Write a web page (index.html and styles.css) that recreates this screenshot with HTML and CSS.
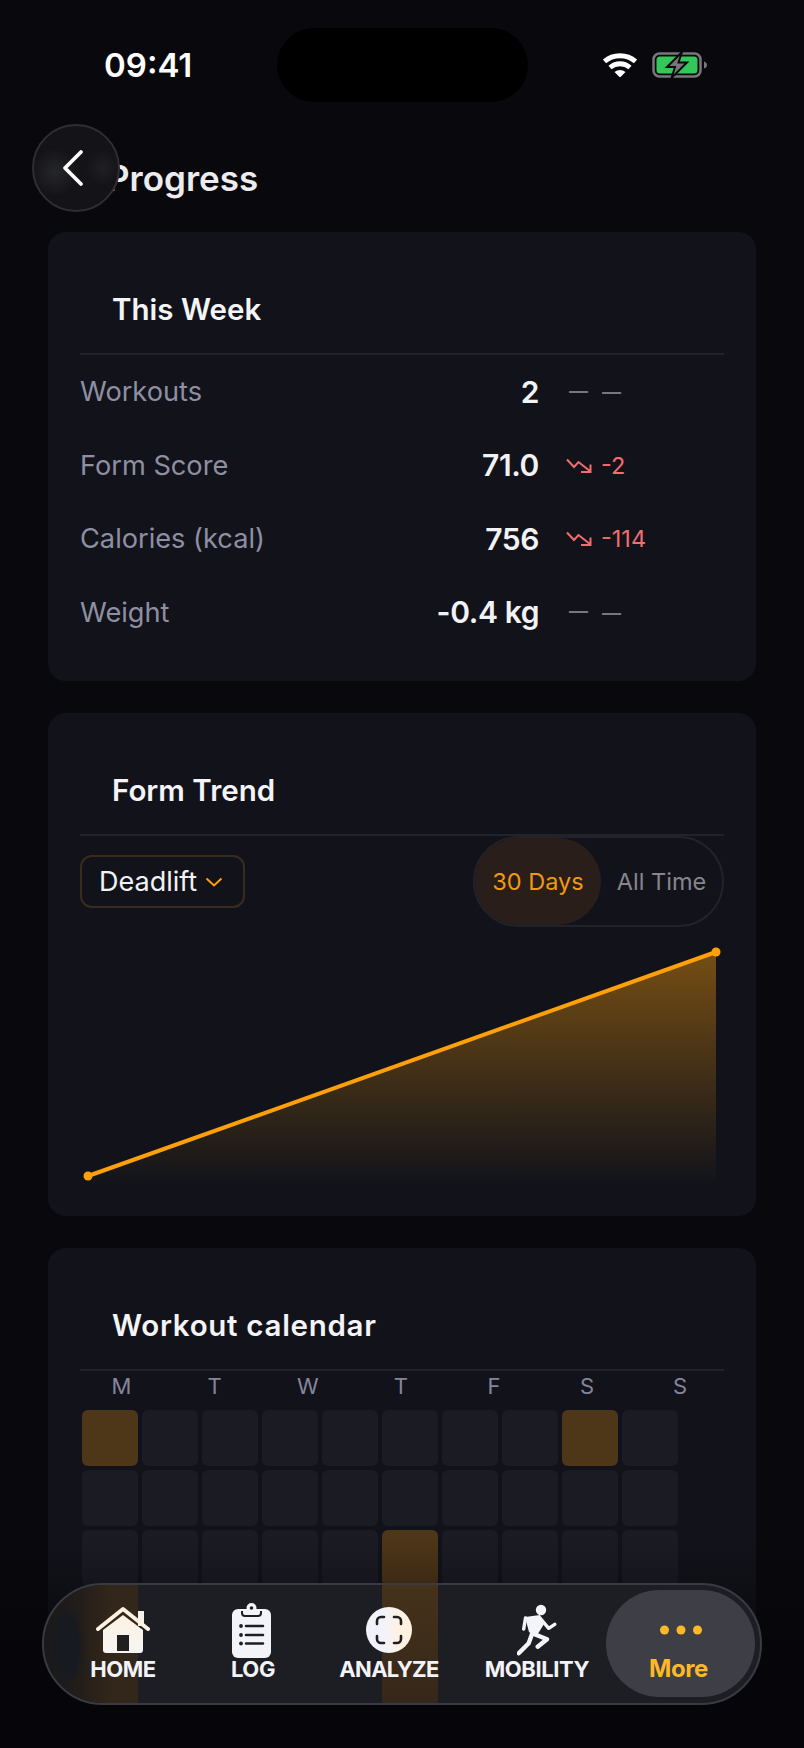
FILE: index.html
```html
<!DOCTYPE html>
<html lang="en">
<head>
<meta charset="utf-8">
<title>Progress</title>
<link rel="stylesheet" href="styles.css">
</head>
<body>
<div class="phone">
  <div class="status">
    <span class="time">09:41</span>
    <span class="island"></span>
    <span class="sys">
      <svg class="wifi" viewBox="0 0 34 24"><path d="M1.500 8.500C10 .8 24 .8 32.500 8.500" fill="none" stroke="#fff" stroke-width="4.800"/><path d="M7 14.500c6-5 14-5 20 0" fill="none" stroke="#fff" stroke-width="4.800"/><path d="M11.500 19c3.300-2.800 7.700-2.800 11 0L17 24.500z" fill="#fff"/></svg>
      <svg class="batt" viewBox="0 0 56 26"><rect x="1.500" y="1.500" width="47" height="23" rx="6" fill="none" stroke="#77777b" stroke-width="2.500"/><rect x="4.500" y="4.500" width="41" height="17" rx="3.500" fill="#34c759"/><path d="M52 9.500c2 .5 3 2 3 3.500s-1 3-3 3.500z" fill="#77777b"/><path d="M30 0 15 15h8L19.500 26 35 10.500h-8.500z" fill="#77777b" stroke="#0a0a0e" stroke-width="2"/></svg>
    </span>
  </div>

  <button class="back" aria-label="Back"><svg viewBox="0 0 22 38"><path d="M19 3 3 19l16 16" fill="none" stroke="#fff" stroke-width="3.800" stroke-linecap="round" stroke-linejoin="round"/></svg></button>
  <h1 class="title">Progress</h1>

  <section class="card">
    <h2 class="card-title">This Week</h2>
    <div class="stats">
      <div class="stat"><span class="stat-label">Workouts</span><span class="stat-value">2</span><span class="delta"><span class="dash">—</span><span class="dash low">—</span></span></div>
      <div class="stat"><span class="stat-label">Form Score</span><span class="stat-value">71.0</span><span class="delta down"><svg class="trend" viewBox="0 0 26 15"><path d="M1 1.500l7 7.500 4.500-5L24.500 13.500M24.500 6.500v7.500H15" fill="none" stroke="#f26d6d" stroke-width="2"/></svg>-2</span></div>
      <div class="stat"><span class="stat-label">Calories (kcal)</span><span class="stat-value">756</span><span class="delta down"><svg class="trend" viewBox="0 0 26 15"><path d="M1 1.500l7 7.500 4.500-5L24.500 13.500M24.500 6.500v7.500H15" fill="none" stroke="#f26d6d" stroke-width="2"/></svg>-114</span></div>
      <div class="stat"><span class="stat-label">Weight</span><span class="stat-value">-0.4 kg</span><span class="delta"><span class="dash">—</span><span class="dash low">—</span></span></div>
    </div>
  </section>

  <section class="card">
    <h2 class="card-title">Form Trend</h2>
    <div class="controls">
      <div class="select">Deadlift<svg viewBox="0 0 18 10"><path d="M1.500 1.500 9 8.500l7.500-7" fill="none" stroke="#ff9f0a" stroke-width="2"/></svg></div>
      <div class="segment"><span class="seg on">30 Days</span><span class="seg">All Time</span></div>
    </div>
    <svg class="chart" viewBox="0 0 644 257">
      <defs><linearGradient id="area" x1="0" y1="0" x2="0" y2="1"><stop offset="0" stop-color="#ff9f0a" stop-opacity=".42"/><stop offset="1" stop-color="#ff9f0a" stop-opacity="0"/></linearGradient></defs>
      <path d="M8 249 636 25V257H8Z" fill="url(#area)"/>
      <path d="M8 249 636 25" stroke="#ff9f0a" stroke-width="4" fill="none"/>
      <circle cx="8" cy="249" r="4.500" fill="#ff9f0a"/>
      <circle cx="636" cy="25" r="4.500" fill="#ff9f0a"/>
    </svg>
  </section>

  <section class="card">
    <h2 class="card-title wide">Workout calendar</h2>
    <div class="weekdays"><span>M</span><span>T</span><span>W</span><span>T</span><span>F</span><span>S</span><span>S</span></div>
    <div class="cal">
      <i class="on"></i><i></i><i></i><i></i><i></i><i></i><i></i><i></i><i class="on"></i><i></i>
      <i></i><i></i><i></i><i></i><i></i><i></i><i></i><i></i><i></i><i></i>
      <i></i><i></i><i></i><i></i><i></i><i class="on"></i><i></i><i></i><i></i><i></i>
      <i class="on"></i><i></i><i></i><i></i><i></i><i class="on"></i><i></i><i></i><i></i><i></i>
    </div>
  </section>

  <div class="fade"></div>

  <nav class="tabbar">
    <span class="strip s1"></span><span class="strip s2"></span><span class="blob"></span>
    <a class="tab">
      <span class="ico"><svg width="54" height="48" viewBox="0 0 54 48"><defs><linearGradient id="warm" x1="0" y1="0" x2="0" y2="1"><stop offset="0" stop-color="#fff2e0"/><stop offset="1" stop-color="#f6f4f6"/></linearGradient></defs><path d="M42 5h6v15h-6z" fill="#f4f0ec"/><path d="M27 9 47 24v20a3 3 0 0 1-3 3H10a3 3 0 0 1-3-3V24z" fill="url(#warm)"/><path d="M2 23 27 3l25 20" fill="none" stroke="#fff2e0" stroke-width="4" stroke-linecap="round" stroke-linejoin="round"/><path d="M21 29h12v16H21z" fill="#211f20"/></svg></span>
      <span class="tab-label">HOME</span>
    </a>
    <a class="tab">
      <span class="ico shift"><svg width="39" height="55" viewBox="0 0 39 55"><rect y="6" width="39" height="49" rx="6" fill="#f3f3fa"/><circle cx="19.500" cy="5" r="5" fill="#f3f3fa"/><circle cx="19.500" cy="5" r="1.800" fill="#1d1e23"/><path d="M10 8v2a3 3 0 0 0 3 3h13a3 3 0 0 0 3-3V8" fill="none" stroke="#1d1e23" stroke-width="2"/><path d="M14 23h17M14 32h17M14 40.500h17" stroke="#1d1e23" stroke-width="2.600" stroke-linecap="round"/><circle cx="9" cy="23" r="1.900" fill="#1d1e23"/><circle cx="9" cy="32" r="1.900" fill="#1d1e23"/><circle cx="9" cy="40.500" r="1.900" fill="#1d1e23"/></svg></span>
      <span class="tab-label">LOG</span>
    </a>
    <a class="tab">
      <span class="ico"><svg width="46" height="46" viewBox="0 0 46 46"><defs><linearGradient id="scan" x1="0" y1="0" x2="1" y2="0"><stop offset=".4" stop-color="#f2f3fa"/><stop offset=".7" stop-color="#fff2e3"/></linearGradient></defs><circle cx="23" cy="23" r="23" fill="url(#scan)"/><path d="M11 17v-3a4 4 0 0 1 4-4h3M28 10h3a4 4 0 0 1 4 4v3M35 29v3a4 4 0 0 1-4 4h-3M18 36h-3a4 4 0 0 1-4-4v-3" fill="none" stroke="#211f20" stroke-width="2.600" stroke-linecap="round"/></svg></span>
      <span class="tab-label narrow">ANALYZE</span>
    </a>
    <a class="tab">
      <span class="ico"><svg width="40" height="52" viewBox="0 0 40 52"><circle cx="24" cy="6" r="5.200" fill="#f3f3fa"/><path d="M8 13 23 11l4 9-8 13-7-5z" fill="#f3f3fa"/><path d="M23 14l8.700 10.300 6-4M8.500 14 6.700 25" fill="none" stroke="#f3f3fa" stroke-width="3.400" stroke-linecap="round" stroke-linejoin="round"/><path d="M17 30l13 5.300-9.300 7.400M15 30l-3.300 9.300-10 10" fill="none" stroke="#f3f3fa" stroke-width="4.400" stroke-linecap="round" stroke-linejoin="round"/></svg></span>
      <span class="tab-label">MOBILITY</span>
    </a>
    <a class="tab active">
      <span class="ico"><svg width="42" height="10" viewBox="0 0 42 10"><circle cx="4.500" cy="5" r="4.500" fill="#fdb827"/><circle cx="21" cy="5" r="4.500" fill="#fdb827"/><circle cx="37.500" cy="5" r="4.500" fill="#fdb827"/></svg></span>
      <span class="tab-label">More</span>
    </a>
  </nav>
</div>
</body>
</html>
```
FILE: styles.css
```css
* { box-sizing: border-box; }
html, body { margin: 0; padding: 0; background: #09090d; }
body { font-family: Inter, "Liberation Sans", sans-serif; }

.phone {
  position: relative;
  width: 804px;
  height: 1748px;
  overflow: hidden;
  background: #09090d;
  color: #f2f2f5;
}

/* status bar */
.status {
  display: grid;
  grid-template-columns: 277px 251px 1fr;
  align-items: center;
  height: 130px;
}
.time {
  padding-left: 104px;
  font-size: 33px;
  font-weight: 600;
  color: #fff;
}
.island {
  height: 74px;
  border-radius: 37px;
  background: #000;
}
.sys {
  display: flex;
  align-items: center;
  gap: 15px;
  padding-left: 75px;
}
.wifi { width: 34px; height: 24px; }
.batt { width: 56px; height: 26px; }

/* header */
.back {
  position: absolute;
  left: 32px;
  top: 124px;
  width: 88px;
  height: 88px;
  display: flex;
  align-items: center;
  justify-content: center;
  padding: 0;
  border: 2px solid #2e2e33;
  border-radius: 50%;
  background:
    radial-gradient(circle at 25% 55%, rgba(70,72,78,.35), transparent 30%),
    radial-gradient(circle at 82% 50%, rgba(70,72,78,.22), transparent 22%),
    #141418;
}
.back svg { width: 22px; height: 38px; margin-left: -6px; }
.title {
  margin: 0 0 0 107px;
  height: 102px;
  padding-top: 28px;
  font-size: 35px;
  line-height: 40px;
  font-weight: 600;
  color: #ececef;
}

/* cards */
.card {
  margin: 0 48px 32px;
  padding: 32px;
  border-radius: 18px;
  background: #12131a;
}
.card-title {
  margin: 0;
  height: 91px;
  padding-left: 32px;
  display: flex;
  align-items: center;
  border-bottom: 2px solid #21222a;
  font-size: 29.500px;
  font-weight: 600;
  color: #f4f4f6;
}
.card-title.wide { letter-spacing: .7px; }

/* stats */
.stat {
  display: grid;
  grid-template-columns: 1fr auto 158px;
  column-gap: 27px;
  align-items: center;
  height: 73.500px;
}
.stat-label { font-size: 27.200px; color: #8f8fa3; }
.stat-value { font-size: 30px; font-weight: 600; letter-spacing: -.4px; color: #f2f2f5; }
.delta {
  display: flex;
  align-items: center;
  gap: 9px;
  font-size: 23.500px;
  color: #77777d;
}
.delta:not(.down) { gap: 0; padding-left: 3px; }
.dash { display: block; width: 33px; font-size: 19px; font-weight: 600; line-height: 24px; color: #77777d; }
.dash.low { padding-top: 3px; }
.down { color: #f26d6d; }
.trend { width: 26px; height: 15px; }

/* controls */
.controls {
  display: flex;
  align-items: center;
  justify-content: space-between;
  height: 91px;
}
.select {
  display: flex;
  align-items: center;
  gap: 8px;
  width: 165px;
  height: 53px;
  padding-left: 17px;
  border: 2px solid #3a2c1c;
  border-radius: 12px;
  font-size: 27px;
  color: #f2f2f5;
}
.select svg { width: 18px; height: 10px; }
.segment {
  display: flex;
  width: 251px;
  height: 91px;
  padding: 0;
  border: 2px solid #21222a;
  border-radius: 46px;
}
.seg {
  display: flex;
  align-items: center;
  justify-content: center;
  flex: 1;
  font-size: 23.500px;
  color: #86868b;
}
.seg.on {
  flex: 0 0 126px;
  border-radius: 44px;
  background: #291e1a;
  color: #ef9a10;
}
.chart { display: block; width: 644px; height: 257px; }

/* calendar */
.weekdays {
  display: grid;
  grid-template-columns: repeat(7, 93.100px);
  margin: 0 0 9px -5px;
  height: 30px;
  align-items: center;
  font-size: 22px;
  color: #85859a;
  text-align: center;
}
.cal {
  display: grid;
  grid-template-columns: repeat(10, 56px);
  grid-auto-rows: 56px;
  gap: 4px;
  margin-left: 2px;
}
.cal i {
  border-radius: 6px;
  background: #1a1b23;
}
.cal i.on { background: #4e3618; }

/* bottom fade + tab bar */
.fade {
  position: absolute;
  left: 0;
  right: 0;
  bottom: 0;
  height: 210px;
  background: linear-gradient(to bottom, rgba(6,6,10,0) 0%, rgba(6,6,10,.25) 22%, rgba(6,6,10,.8) 50%, #06060a 75%);
}
.tabbar {
  position: absolute;
  left: 42px;
  top: 1583px;
  width: 720px;
  height: 122px;
  display: grid;
  grid-template-columns: 146px 114px 158px 138px 149px;
  padding: 5px 5px 6px 6px;
  overflow: hidden;
  border: 2px solid #3a3a44;
  border-radius: 61px;
  background: #1d1e23;
}
.strip {
  position: absolute;
  top: 0;
  bottom: 0;
  width: 56px;
  background: linear-gradient(to bottom, #46321a, #35271a);
}
.s1 {
  left: 0;
  width: 94px;
  background: linear-gradient(to right, #1a181b 0%, #241e1a 40%, #33261a 70%, #33261a 100%);
}
.s2 { left: 338px; }
.blob {
  position: absolute;
  left: 9px;
  top: 26px;
  width: 28px;
  height: 70px;
  border-radius: 50%;
  background: #171a21;
  filter: blur(2px);
}
.tab {
  position: relative;
  display: flex;
  flex-direction: column;
  align-items: center;
  border-radius: 54px;
}
.ico {
  display: flex;
  align-items: center;
  justify-content: center;
  height: 56px;
  margin-top: 12px;
}
.ico.shift { margin-left: -4px; }
.tab-label {
  font-size: 22px;
  line-height: 22px;
  font-weight: 700;
  letter-spacing: -.4px;
  color: #f3f3f7;
}
.tab-label.narrow { letter-spacing: -.7px; }
.tab.active { background: #3e3e46; }
.tab.active .tab-label { color: #fdb827; font-size: 24px; margin-left: -4px; }
```
